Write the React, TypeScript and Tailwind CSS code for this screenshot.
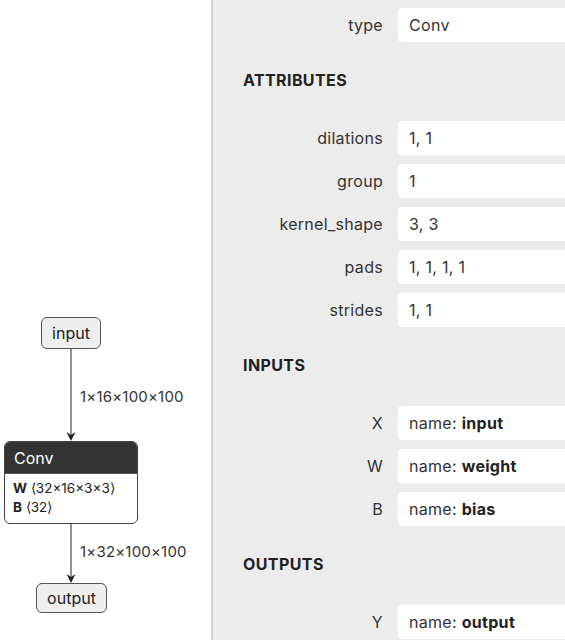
import React from 'react';

const font = { fontFamily: 'Inter, "Noto Sans", sans-serif' };

type Row = { label: string; value: React.ReactNode };

const Field: React.FC<Row> = ({ label, value }) => (
  <div className="flex items-center gap-[15px]">
    <div className="w-[140px] shrink-0 text-right text-[16px] tracking-[0.3px] text-[#333]">{label}</div>
    <div className="h-[34px] w-[200px] shrink-0 flex items-center rounded-l-[4px] bg-white pl-[11px] text-[16px] tracking-[0.3px] text-[#333]">
      {value}
    </div>
  </div>
);

const Heading: React.FC<{ children: React.ReactNode }> = ({ children }) => (
  <div className="pt-[28px] pb-[31px] leading-[20px] text-[16px] font-bold tracking-[0.4px] text-[#222]">{children}</div>
);

const named = (n: string) => (
  <span>
    name: <b className="font-bold text-[#222]">{n}</b>
  </span>
);

// graph on the left: nodes sit at their canvas positions
const Graph: React.FC = () => (
  <div className="relative h-full w-[211px] bg-white">
    <svg className="absolute inset-0" width="211" height="640">
      <line x1="71" y1="349" x2="71" y2="439" stroke="#555" strokeWidth="1.3" />
      <path d="M66.5 432 L71 441 L75.5 432 L71 435 Z" fill="#222" />
      <line x1="71" y1="520" x2="71" y2="581" stroke="#555" strokeWidth="1.3" />
      <path d="M66.5 574 L71 583 L75.5 574 L71 577 Z" fill="#222" />
    </svg>

    <div className="absolute left-[41px] top-[317px] flex h-[32px] w-[60px] items-center justify-center rounded-[6px] border border-[#555] bg-[#eeeeee] text-[16px] text-[#222]">
      input
    </div>
    <div className="absolute left-[80px] top-[386px] text-[15px] tracking-[0.2px] text-[#333]">1×16×100×100</div>

    <div className="absolute left-[4px] top-[441px] w-[134px] overflow-hidden rounded-[6px] border border-[#444] bg-white">
      <div className="flex h-[31px] items-center bg-[#333] pl-[9px] text-[16px] text-white">Conv</div>
      <div className="border-t border-[#555] px-[8px] pt-[5px] pb-[6px] text-[13.5px] leading-[19px] text-[#222]">
        <div>
          <b className="font-bold">W</b>&nbsp;⟨32×16×3×3⟩
        </div>
        <div>
          <b className="font-bold">B</b>&nbsp;⟨32⟩
        </div>
      </div>
    </div>
    <div className="absolute left-[80px] top-[541px] text-[15px] tracking-[0.2px] text-[#333]">1×32×100×100</div>

    <div className="absolute left-[36px] top-[583px] flex h-[30px] w-[71px] items-center justify-center rounded-[6px] border border-[#555] bg-[#eeeeee] text-[16px] text-[#222]">
      output
    </div>
  </div>
);

export default function App() {
  return (
    <div className="flex h-[640px] w-[565px] overflow-hidden" style={font}>
      <Graph />
      <div className="w-[2px] shrink-0 bg-[#d4d4d4]" />
      <div className="flex-1 overflow-hidden bg-[#ececec] pl-[30px] pt-[8px]">
        <div className="flex flex-col gap-[9px]">
          <Field label="type" value="Conv" />
        </div>
        <Heading>ATTRIBUTES</Heading>
        <div className="flex flex-col gap-[9px]">
          <Field label="dilations" value="1, 1" />
          <Field label="group" value="1" />
          <Field label="kernel_shape" value="3, 3" />
          <Field label="pads" value="1, 1, 1, 1" />
          <Field label="strides" value="1, 1" />
        </div>
        <Heading>INPUTS</Heading>
        <div className="flex flex-col gap-[9px]">
          <Field label="X" value={named('input')} />
          <Field label="W" value={named('weight')} />
          <Field label="B" value={named('bias')} />
        </div>
        <Heading>OUTPUTS</Heading>
        <div className="flex flex-col gap-[9px]">
          <Field label="Y" value={named('output')} />
        </div>
      </div>
    </div>
  );
}
